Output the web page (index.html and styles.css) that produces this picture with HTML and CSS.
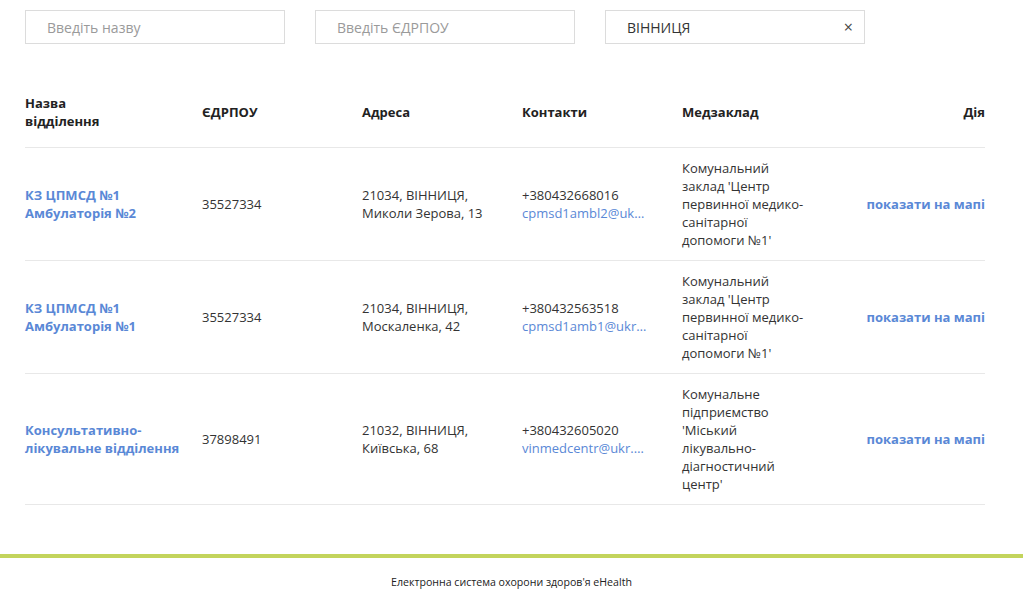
FILE: index.html
```html
<!DOCTYPE html>
<html>
<head>
    <title>Відділення</title>
    <meta charset="UTF-8">
    <link rel="stylesheet" href="styles.css">
</head>
<body>
    <div class="container">
        <div class="filters">
            <div class="field"><input type="text" placeholder="Введіть назву"></div>
            <div class="field"><input type="text" placeholder="Введіть ЄДРПОУ"></div>
            <div class="field">
                <input type="text" value="ВІННИЦЯ">
                <span class="clear">&times;</span>
            </div>
        </div>

        <table class="divisions">
            <colgroup>
                <col style="width: 177px">
                <col style="width: 160px">
                <col style="width: 160px">
                <col style="width: 160px">
                <col style="width: 160px">
                <col>
            </colgroup>
            <thead>
                <tr>
                    <th>Назва<br>відділення</th>
                    <th>ЄДРПОУ</th>
                    <th>Адреса</th>
                    <th>Контакти</th>
                    <th>Медзаклад</th>
                    <th class="action">Дія</th>
                </tr>
            </thead>
            <tbody>
                <tr>
                    <td><a class="name" href="#">КЗ ЦПМСД №1 Амбулаторія №2</a></td>
                    <td>35527334</td>
                    <td>21034, ВІННИЦЯ, Миколи Зерова, 13</td>
                    <td><div>+380432668016</div><a class="email" href="#">cpmsd1ambl2@ukr.net</a></td>
                    <td>Комунальний заклад 'Центр первинної медико-санітарної допомоги №1'</td>
                    <td class="action"><a href="#">показати на мапі</a></td>
                </tr>
                <tr>
                    <td><a class="name" href="#">КЗ ЦПМСД №1 Амбулаторія №1</a></td>
                    <td>35527334</td>
                    <td>21034, ВІННИЦЯ, Москаленка, 42</td>
                    <td><div>+380432563518</div><a class="email" href="#">cpmsd1amb1@ukr.net</a></td>
                    <td>Комунальний заклад 'Центр первинної медико-санітарної допомоги №1'</td>
                    <td class="action"><a href="#">показати на мапі</a></td>
                </tr>
                <tr>
                    <td><a class="name" href="#">Консультативно-лікувальне відділення</a></td>
                    <td>37898491</td>
                    <td>21032, ВІННИЦЯ, Київська, 68</td>
                    <td><div>+380432605020</div><a class="email" href="#">vinmedcentr@ukr.net</a></td>
                    <td>Комунальне підприємство 'Міський лікувально-діагностичний центр'</td>
                    <td class="action"><a href="#">показати на мапі</a></td>
                </tr>
            </tbody>
        </table>
    </div>

    <div class="footer">Електронна система охорони здоров'я eHealth</div>
</body>
</html>
```

FILE: styles.css
```css
body {
    font-family: 'Open Sans', 'DejaVu Sans', sans-serif;
    margin: 0;
    padding: 0;
    background: #fff;
    color: #333;
}

.container {
    padding: 10px 38px 0 25px;
}

.filters {
    display: flex;
    gap: 30px;
}

.field {
    position: relative;
    width: 260px;
}

.field input {
    width: 100%;
    height: 34px;
    box-sizing: border-box;
    border: 1px solid #dcdcdc;
    padding: 0 21px;
    font-family: inherit;
    font-size: 14px;
    color: #333;
    outline: none;
}

.field input::placeholder {
    color: #9a9a9a;
}

.clear {
    position: absolute;
    right: 12px;
    top: 7px;
    font-size: 16px;
    line-height: 20px;
    color: #444;
}

.divisions {
    width: 960px;
    margin-top: 39px;
    border-collapse: collapse;
    table-layout: fixed;
    font-size: 13px;
    line-height: 18px;
}

.divisions th {
    text-align: left;
    font-weight: 700;
    color: #222;
    padding: 11px 30px 17px 0;
    border-bottom: 1px solid #e8e8e8;
}

.divisions td {
    padding: 11px 30px 11px 0;
    border-bottom: 1px solid #e8e8e8;
    vertical-align: middle;
}

.divisions td:first-child {
    padding-right: 8px;
}

.divisions td:nth-child(5) {
    padding-right: 36px;
}

.divisions .action {
    text-align: right;
    padding-right: 0;
}

a {
    color: #5a88d6;
    text-decoration: none;
}

.name, .action a {
    font-weight: 700;
}

.email {
    display: block;
    overflow: hidden;
    white-space: nowrap;
    text-overflow: ellipsis;
    max-width: 125px;
}

.footer {
    margin-top: 49px;
    border-top: 4px solid #c3d45c;
    padding: 17px 0 0 0;
    height: 40px;
    text-align: center;
    font-size: 10.6px;
    color: #222;
}
```
